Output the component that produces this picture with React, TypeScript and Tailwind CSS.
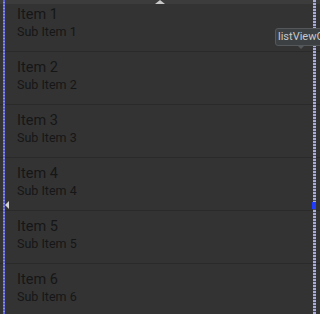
const ITEMS = [1, 2, 3, 4, 5, 6];

export default function App() {
  return (
    <div className="relative w-[320px] h-[314px] overflow-hidden bg-[#333333] font-['Roboto',sans-serif]">
      {/* top strip with resize handle */}
      <div className="h-[4px] bg-[#3c3c3c] flex justify-center">
        <div className="w-0 h-0 border-x-[5px] border-x-transparent border-b-[4px] border-b-[#c8c8c8]" />
      </div>

      {/* list rows */}
      <div className="-mt-[5px]">
        {ITEMS.map((n) => (
          <div key={n} className="h-[53px] border-b border-[#2a2a2a] pl-[17px] pt-[7px] text-[#161616]">
            <div className="text-[14.5px] leading-[18px]">Item {n}</div>
            <div className="text-[12.5px] leading-[15px]">Sub Item {n}</div>
          </div>
        ))}
      </div>

      {/* selection bounds */}
      <div className="absolute left-[3px] top-0 bottom-0 w-[2px] bg-[repeating-linear-gradient(to_bottom,#5c62d6_0px,#5c62d6_2px,#8c90e0_2px,#8c90e0_3px)]" />
      <div className="absolute left-[313px] top-0 bottom-0 w-[3px] bg-[repeating-linear-gradient(to_bottom,#a9acd6_0px,#a9acd6_2px,#4b4d66_2px,#4b4d66_3px)]" />

      {/* side handles */}
      <div className="absolute left-[5px] top-[201px] w-0 h-0 border-y-[4px] border-y-transparent border-r-[4px] border-r-[#d0d0d0]" />
      <div className="absolute left-[312px] top-[202px] w-[4px] h-[7px] bg-[#1f3cff]" />

      {/* tooltip */}
      <div className="absolute left-[275px] top-[28px] w-[60px] h-[18px] pl-[2px] rounded-[3px] bg-[#3c4043] border border-[#55585b] text-[11px] leading-[16px] text-[#c8c8c8] whitespace-nowrap">
        listViewO
      </div>
      <div className="absolute left-[297px] top-[45px] w-0 h-0 border-x-[4px] border-x-transparent border-t-[4px] border-t-[#55585b]" />
    </div>
  );
}
